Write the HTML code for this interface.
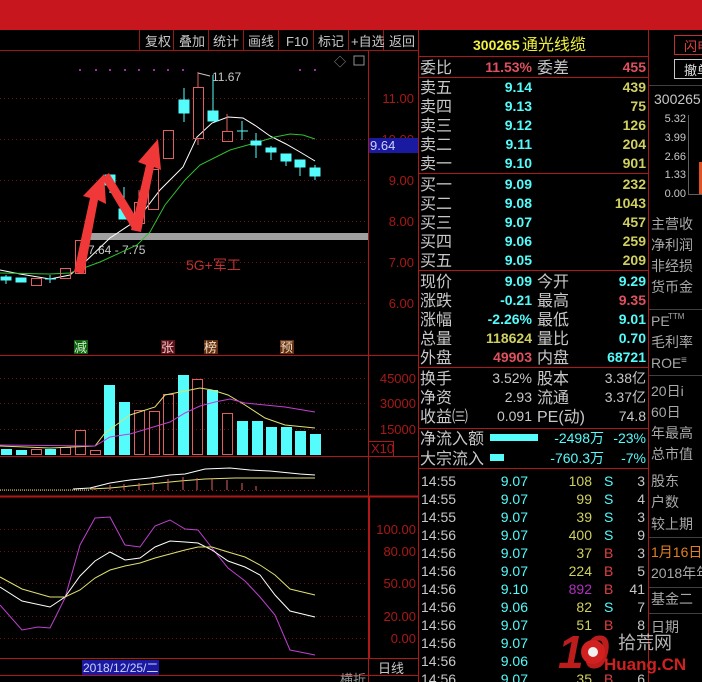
<!DOCTYPE html>
<html><head><meta charset="utf-8"><style>
html,body{margin:0;padding:0;background:#000;}
svg{display:block;font-family:"Liberation Sans","Noto Sans CJK SC",sans-serif;}
.l{fill:#c8c8c8;font-size:16px;}
.n{font-size:14px;font-weight:bold;font-family:"Liberation Sans",sans-serif;}
.ax{fill:#a81818;font-size:13px;font-family:"Liberation Sans",sans-serif;}
.g{fill:#a8a8a8;font-size:14px;}
</style></head><body>
<svg width="702" height="682" viewBox="0 0 702 682" xmlns="http://www.w3.org/2000/svg">
<rect x="0" y="0" width="702" height="30" fill="#c8161e"/>
<g stroke="#9a1818" stroke-width="1" fill="none">
<line x1="0" y1="50.5" x2="418" y2="50.5"/>
<line x1="139.5" y1="30" x2="139.5" y2="50"/><line x1="173.5" y1="30" x2="173.5" y2="50"/><line x1="208.5" y1="30" x2="208.5" y2="50"/><line x1="243.5" y1="30" x2="243.5" y2="50"/><line x1="278.5" y1="30" x2="278.5" y2="50"/><line x1="313.5" y1="30" x2="313.5" y2="50"/><line x1="348.5" y1="30" x2="348.5" y2="50"/><line x1="383.5" y1="30" x2="383.5" y2="50"/>
</g>
<g class="l" style="font-size:13px" fill="#c8c8c8">
<text x="145" y="46">复权</text><text x="179" y="46">叠加</text><text x="213" y="46">统计</text><text x="248" y="46">画线</text><text x="286" y="46">F10</text><text x="318" y="46">标记</text><text x="351" y="46">+自选</text><text x="389" y="46">返回</text>
</g>
<g stroke="#b01818" fill="none">
<line x1="368.5" y1="51" x2="368.5" y2="682"/>
<line x1="418.5" y1="30" x2="418.5" y2="682"/>
<line x1="0" y1="355.5" x2="418" y2="355.5"/>
<line x1="0" y1="456.5" x2="418" y2="456.5"/>
<line x1="0" y1="496.5" x2="418" y2="496.5" stroke-width="2"/>
<line x1="369" y1="496.5" x2="369" y2="658" stroke-width="2"/>
<line x1="0" y1="658.5" x2="418" y2="658.5"/>
<line x1="0" y1="675.5" x2="418" y2="675.5"/>
<rect x="368.5" y="441.5" width="25" height="15"/>
</g>
<g stroke="#6a1010" stroke-dasharray="1,3">
<line x1="0" y1="98.5" x2="368" y2="98.5"/><line x1="0" y1="139.5" x2="368" y2="139.5"/><line x1="0" y1="180.5" x2="368" y2="180.5"/><line x1="0" y1="221.5" x2="368" y2="221.5"/><line x1="0" y1="262.5" x2="368" y2="262.5"/><line x1="0" y1="303.5" x2="368" y2="303.5"/>
<line x1="0" y1="378.5" x2="368" y2="378.5"/><line x1="0" y1="403.5" x2="368" y2="403.5"/><line x1="0" y1="429.5" x2="368" y2="429.5"/>
<line x1="0" y1="490.5" x2="368" y2="490.5" stroke="#b01818"/>
<line x1="0" y1="529.5" x2="368" y2="529.5"/><line x1="0" y1="551.5" x2="368" y2="551.5"/><line x1="0" y1="583.5" x2="368" y2="583.5"/><line x1="0" y1="616.5" x2="368" y2="616.5"/><line x1="0" y1="638.5" x2="368" y2="638.5"/>
</g>
<g class="ax" text-anchor="end">
<text x="414" y="103">11.00</text><text x="414" y="144">10.00</text><text x="414" y="185">9.00</text><text x="414" y="226">8.00</text><text x="414" y="267">7.00</text><text x="414" y="308">6.00</text>
<text x="416" y="383">45000</text><text x="416" y="408">30000</text><text x="416" y="434">15000</text>
<text x="416" y="534">100.00</text><text x="416" y="556">80.00</text><text x="416" y="588">50.00</text><text x="416" y="621">20.00</text><text x="416" y="643">0.00</text>
</g>
<text x="371" y="453" class="ax">X10</text>
<rect x="369" y="138" width="49" height="15" fill="#1a1aa0"/>
<text x="370" y="150" fill="#d0d0ff" font-size="13">9.64</text>
<g fill="#a030a0"><rect x="79" y="69" width="2" height="2"/><rect x="95" y="69" width="2" height="2"/><rect x="109" y="69" width="2" height="2"/><rect x="124" y="69" width="2" height="2"/><rect x="138" y="69" width="2" height="2"/><rect x="153" y="69" width="2" height="2"/><rect x="167" y="69" width="2" height="2"/><rect x="182" y="69" width="2" height="2"/><rect x="299" y="69" width="2" height="2"/><rect x="314" y="69" width="2" height="2"/></g>
<text x="334" y="66" fill="#909090" font-size="12">◇</text>
<rect x="354" y="56" width="10" height="9" fill="none" stroke="#909090"/>
<text x="212" y="81" fill="#c8c8c8" font-size="12">11.67</text>
<path d="M198 73 L198 80 M198 73 L210 76" stroke="#c8c8c8" fill="none"/>
<rect x="85" y="233" width="283" height="7" fill="#a0a0a0"/>
<text x="88" y="254" fill="#c8c8c8" font-size="12">7.64 - 7.75</text>
<text x="186" y="270" fill="#c03030" font-size="14">5G+军工</text>
<polyline fill="none" stroke="#ffffff" stroke-width="1" points="0,270 20,274 50,279 70,275 85,262 110,238 137,220 160,190 183,167 197,137 212,123 228,117 243,118 256,126 270,136 286,144 300,152 315,161"/>
<polyline fill="none" stroke="#30c030" stroke-width="1" points="0,273 50,274 70,273 100,262 137,245 150,232 165,205 185,180 200,165 230,150 255,143 275,137 290,134 303,135 315,139"/>
<g stroke="#54fcfc" fill="#54fcfc">
<rect x="1" y="277" width="10" height="3"/><line x1="6" y1="275" x2="6" y2="284"/>
<rect x="16" y="278" width="10" height="4"/>
<line x1="45" y1="279" x2="56" y2="279"/><line x1="50" y1="275" x2="50" y2="283"/>
<rect x="105" y="175" width="10" height="10"/><line x1="110" y1="175" x2="110" y2="193"/>
<rect x="119" y="209" width="10" height="10"/><line x1="124" y1="187" x2="124" y2="219"/>
<rect x="179" y="100" width="10" height="13"/><line x1="184" y1="88" x2="184" y2="122"/>
<rect x="208" y="111" width="10" height="10"/><line x1="213" y1="75" x2="213" y2="121"/>
<line x1="237" y1="131" x2="248" y2="131"/><line x1="242" y1="121" x2="242" y2="140"/>
<rect x="251" y="141" width="10" height="4"/><line x1="256" y1="133" x2="256" y2="158"/>
<rect x="266" y="148" width="10" height="4"/><line x1="271" y1="146" x2="271" y2="160"/>
<rect x="281" y="154" width="10" height="7"/><line x1="286" y1="161" x2="286" y2="166"/>
<rect x="295" y="160" width="10" height="7"/><line x1="300" y1="167" x2="300" y2="176"/>
<rect x="310" y="168" width="10" height="8"/><line x1="315" y1="165" x2="315" y2="180"/>
</g>
<g stroke="#e06060" fill="none">
<rect x="31.5" y="278.5" width="10" height="7"/>
<rect x="60.5" y="268.5" width="10" height="10"/>
<rect x="75.5" y="240.5" width="10" height="33"/>
<rect x="134.5" y="202.5" width="10" height="21"/><line x1="139" y1="190" x2="139" y2="230"/>
<rect x="148.5" y="169.5" width="10" height="40"/>
<rect x="163.5" y="130.5" width="10" height="28"/>
<rect x="193.5" y="87.5" width="10" height="51"/><line x1="198" y1="72" x2="198" y2="87"/><line x1="198" y1="138" x2="198" y2="145"/>
<rect x="222.5" y="131.5" width="10" height="10"/><line x1="227" y1="114" x2="227" y2="131"/>
</g>
<g fill="#f03838">
<polygon points="74,272 90,198 83,196 104,174 106,204 98,200 84,274"/>
<polygon points="102,178 109,173 139,222 133,230"/>
<polygon points="131,230 146,165 138,162 158,139 161,170 154,167 141,232"/>
</g>
<rect x="74" y="340" width="14" height="14" fill="#106010"/><text x="74" y="352" fill="#c8f0c8" font-size="13">减</text>
<rect x="161" y="340" width="14" height="14" fill="#601018"/><text x="161" y="352" fill="#f0c8c8" font-size="13">张</text>
<rect x="204" y="340" width="14" height="14" fill="#603010"/><text x="204" y="352" fill="#f0d8c0" font-size="13">榜</text>
<rect x="280" y="340" width="14" height="14" fill="#603010"/><text x="280" y="352" fill="#f0d8c0" font-size="13">预</text>
<g fill="#54fcfc">
<rect x="1" y="449" width="11" height="6"/><rect x="16" y="450" width="11" height="5"/><rect x="45" y="449" width="11" height="6"/>
<rect x="104" y="385" width="11" height="70"/><rect x="119" y="402" width="11" height="53"/><rect x="178" y="375" width="11" height="80"/><rect x="207" y="390" width="11" height="65"/>
<rect x="237" y="421" width="11" height="34"/><rect x="252" y="421" width="11" height="34"/><rect x="266" y="427" width="11" height="28"/><rect x="281" y="427" width="11" height="28"/><rect x="295" y="431" width="11" height="24"/><rect x="310" y="434" width="11" height="21"/>
</g>
<g fill="none" stroke="#e06060">
<rect x="31.5" y="449.5" width="10" height="5"/><rect x="60.5" y="447.5" width="10" height="7"/><rect x="75.5" y="430.5" width="10" height="24"/><rect x="90.5" y="450.5" width="10" height="4"/>
<rect x="134.5" y="410.5" width="10" height="44"/><rect x="149.5" y="411.5" width="10" height="43"/><rect x="163.5" y="394.5" width="10" height="60"/><rect x="192.5" y="379.5" width="10" height="75"/><rect x="222.5" y="413.5" width="10" height="41"/>
</g>
<polyline fill="none" stroke="#e0e070" points="0,446 50,448 95,446 105,433 130,415 155,407 165,395 180,392 200,388 212,390 228,395 245,405 265,418 285,425 315,428"/>
<polyline fill="none" stroke="#c040d0" points="0,445 95,446 110,437 130,434 150,428 170,422 185,413 200,406 215,402 230,399 245,403 265,405 285,407 315,412"/>
<line x1="0" y1="490" x2="90" y2="490" stroke="#e0e070" stroke-dasharray="1,1"/>
<polyline fill="none" stroke="#ffffff" points="73,489 90,488 110,483 130,480 150,478 170,475 185,474 205,469 230,468 250,470 270,471 300,474 315,475"/>
<polyline fill="none" stroke="#e0e070" points="90,489 110,488 140,485 160,483 180,481 205,479 235,478 260,478 290,478 315,478"/>
<g stroke="#e06060"><line x1="95" y1="490" x2="95" y2="487"/><line x1="110" y1="490" x2="110" y2="485"/><line x1="124" y1="490" x2="124" y2="484"/><line x1="139" y1="490" x2="139" y2="483"/><line x1="153" y1="490" x2="153" y2="482"/><line x1="168" y1="490" x2="168" y2="479"/><line x1="183" y1="490" x2="183" y2="477"/><line x1="197" y1="490" x2="197" y2="478"/><line x1="212" y1="490" x2="212" y2="478"/><line x1="227" y1="490" x2="227" y2="480"/><line x1="242" y1="490" x2="242" y2="483"/><line x1="256" y1="490" x2="256" y2="486"/></g>
<polyline fill="none" stroke="#c040d0" points="0,605 22,630 38,627 50,628 65,598 80,545 95,518 110,517 125,545 140,547 155,526 170,520 185,529 198,530 212,548 228,568 245,581 260,597 275,615 290,650 300,652 315,655"/>
<polyline fill="none" stroke="#ffffff" points="0,587 22,601 50,607 65,597 80,576 95,561 110,552 125,560 140,558 155,547 170,541 185,542 198,543 212,550 228,561 245,567 260,575 275,595 290,611 315,617"/>
<polyline fill="none" stroke="#e0e070" points="0,577 22,589 50,597 65,597 80,590 95,578 110,570 125,566 140,563 155,558 170,554 185,550 198,547 212,547 228,552 245,557 260,565 275,575 290,589 315,595"/>
<rect x="82" y="660" width="77" height="15" fill="#1a1aa0"/>
<text x="83" y="672" fill="#d0d0ff" font-size="12">2018/12/25/二</text>
<text x="378" y="673" fill="#c8c8c8" font-size="13">日线</text>
<text x="340" y="684" fill="#909090" font-size="13">横折</text>
<g stroke="#b01818" fill="none">
<line x1="648.5" y1="30" x2="648.5" y2="682"/>
<line x1="419" y1="56.5" x2="648" y2="56.5"/><line x1="419" y1="77.5" x2="648" y2="77.5"/><line x1="419" y1="173.5" x2="648" y2="173.5"/><line x1="419" y1="270.5" x2="648" y2="270.5"/><line x1="419" y1="367.5" x2="648" y2="367.5"/><line x1="419" y1="428.5" x2="648" y2="428.5"/><line x1="419" y1="468.5" x2="648" y2="468.5"/>
</g>
<text x="473" y="50" fill="#f0f040" font-size="14" font-weight="bold">300265</text>
<text x="522" y="50" fill="#f0f040" font-size="16">通光线缆</text>
<g class="l">
<text x="420" y="73">委比</text><text x="537" y="73">委差</text>
<text x="420" y="93">卖五</text><text x="420" y="112">卖四</text><text x="420" y="131">卖三</text><text x="420" y="150">卖二</text><text x="420" y="169">卖一</text>
<text x="420" y="190">买一</text><text x="420" y="209">买二</text><text x="420" y="228">买三</text><text x="420" y="247">买四</text><text x="420" y="266">买五</text>
<text x="420" y="287">现价</text><text x="537" y="287">今开</text>
<text x="420" y="306">涨跌</text><text x="537" y="306">最高</text>
<text x="420" y="325">涨幅</text><text x="537" y="325">最低</text>
<text x="420" y="344">总量</text><text x="537" y="344">量比</text>
<text x="420" y="363">外盘</text><text x="537" y="363">内盘</text>
<text x="420" y="384">换手</text><text x="537" y="384">股本</text>
<text x="420" y="403">净资</text><text x="537" y="403">流通</text>
<text x="420" y="422">收益㈢</text><text x="537" y="422">PE(动)</text>
<text x="420" y="444">净流入额</text><text x="420" y="464">大宗流入</text>
</g>
<g class="n" text-anchor="end">
<text x="532" y="72" fill="#e05060">11.53%</text><text x="646" y="72" fill="#e05060">455</text>
<g fill="#54fcfc"><text x="532" y="92">9.14</text><text x="532" y="111">9.13</text><text x="532" y="130">9.12</text><text x="532" y="149">9.11</text><text x="532" y="168">9.10</text><text x="532" y="189">9.09</text><text x="532" y="208">9.08</text><text x="532" y="227">9.07</text><text x="532" y="246">9.06</text><text x="532" y="265">9.05</text>
<text x="532" y="286">9.09</text><text x="532" y="305">-0.21</text><text x="532" y="324">-2.26%</text><text x="646" y="286">9.29</text><text x="646" y="324">9.01</text><text x="646" y="343">0.70</text><text x="646" y="362">68721</text></g>
<g fill="#d0d060"><text x="646" y="92">439</text><text x="646" y="111">75</text><text x="646" y="130">126</text><text x="646" y="149">204</text><text x="646" y="168">901</text><text x="646" y="189">232</text><text x="646" y="208">1043</text><text x="646" y="227">457</text><text x="646" y="246">259</text><text x="646" y="265">209</text><text x="532" y="343">118624</text></g>
<text x="646" y="305" fill="#e05060">9.35</text><text x="532" y="362" fill="#e05060">49903</text>
<g fill="#c8c8c8" font-weight="normal"><text x="532" y="383">3.52%</text><text x="532" y="402">2.93</text><text x="532" y="421">0.091</text><text x="646" y="383">3.38亿</text><text x="646" y="402">3.37亿</text><text x="646" y="421">74.8</text></g>
<g fill="#54fcfc" font-weight="normal"><text x="604" y="443">-2498万</text><text x="646" y="443">-23%</text><text x="604" y="463">-760.3万</text><text x="646" y="463">-7%</text></g>
</g>
<rect x="490" y="434" width="48" height="7" fill="#54fcfc"/>
<rect x="490" y="454" width="14" height="7" fill="#54fcfc"/>
<g class="n" font-size="14">
<g fill="#c8c8c8" font-weight="normal"><text x="421" y="486">14:55</text><text x="421" y="504">14:55</text><text x="421" y="522">14:55</text><text x="421" y="540">14:56</text><text x="421" y="558">14:56</text><text x="421" y="576">14:56</text><text x="421" y="594">14:56</text><text x="421" y="612">14:56</text><text x="421" y="630">14:56</text><text x="421" y="648">14:56</text><text x="421" y="666">14:56</text><text x="421" y="684">14:56</text></g>
<g fill="#54fcfc" text-anchor="end" font-weight="normal"><text x="528" y="486">9.07</text><text x="528" y="504">9.07</text><text x="528" y="522">9.07</text><text x="528" y="540">9.07</text><text x="528" y="558">9.07</text><text x="528" y="576">9.07</text><text x="528" y="594">9.10</text><text x="528" y="612">9.06</text><text x="528" y="630">9.07</text><text x="528" y="648">9.07</text><text x="528" y="666">9.06</text><text x="528" y="684">9.07</text></g>
<g fill="#d0d060" text-anchor="end" font-weight="normal"><text x="592" y="486">108</text><text x="592" y="504">99</text><text x="592" y="522">39</text><text x="592" y="540">400</text><text x="592" y="558">37</text><text x="592" y="576">224</text><text x="592" y="594" fill="#b030c0">892</text><text x="592" y="612">82</text><text x="592" y="630">51</text><text x="592" y="684">35</text></g>
<g font-weight="normal"><text x="604" y="486" fill="#54fcfc">S</text><text x="604" y="504" fill="#54fcfc">S</text><text x="604" y="522" fill="#54fcfc">S</text><text x="604" y="540" fill="#54fcfc">S</text><text x="604" y="558" fill="#e04040">B</text><text x="604" y="576" fill="#e04040">B</text><text x="604" y="594" fill="#e04040">B</text><text x="604" y="612" fill="#54fcfc">S</text><text x="604" y="630" fill="#e04040">B</text><text x="604" y="684" fill="#e04040">B</text></g>
<g fill="#c8c8c8" text-anchor="end" font-weight="normal"><text x="645" y="486">3</text><text x="645" y="504">4</text><text x="645" y="522">3</text><text x="645" y="540">9</text><text x="645" y="558">3</text><text x="645" y="576">5</text><text x="645" y="594">41</text><text x="645" y="612">7</text><text x="645" y="630">8</text><text x="645" y="684">6</text></g>
</g>
<rect x="674.5" y="35.5" width="30" height="19" fill="none" stroke="#c03030"/>
<text x="684" y="51" fill="#e04040" font-size="13">闪电</text>
<rect x="674.5" y="59.5" width="30" height="19" fill="none" stroke="#c8c8c8"/>
<text x="684" y="75" fill="#e0e0e0" font-size="13">撤单</text>
<line x1="649" y1="85.5" x2="702" y2="85.5" stroke="#404040"/>
<text x="654" y="104" fill="#c8c8c8" font-size="14">300265</text>
<g fill="#c8c8c8" font-size="11" text-anchor="end"><text x="686" y="122">5.32</text><text x="686" y="141">3.99</text><text x="686" y="160">2.66</text><text x="686" y="178">1.33</text><text x="686" y="197">0.00</text></g>
<line x1="688.5" y1="115" x2="688.5" y2="194" stroke="#606060"/><line x1="688" y1="194.5" x2="702" y2="194.5" stroke="#606060"/>
<rect x="699" y="162" width="3" height="32" fill="#e05020"/>
<g class="g" font-size="14">
<text x="651" y="229">主营收</text><text x="651" y="250">净利润</text><text x="651" y="271">非经损</text><text x="651" y="292">货币金</text>
<text x="651" y="326">PE</text><text x="668" y="319" font-size="8">TTM</text><text x="651" y="347">毛利率</text><text x="651" y="368">ROE</text><text x="681" y="363" font-size="10">≡</text>
<text x="651" y="396">20日i</text><text x="651" y="417">60日</text><text x="651" y="438">年最高</text><text x="651" y="459">总市值</text>
<text x="651" y="486">股东</text><text x="651" y="507">户数</text><text x="651" y="529">较上期</text>
<text x="651" y="557" fill="#e08020">1月16日</text><text x="651" y="578">2018年年</text>
<text x="651" y="604">基金二</text><text x="651" y="632">日期</text>
</g>
<g stroke="#404040"><line x1="649" y1="309.5" x2="702" y2="309.5"/><line x1="649" y1="375.5" x2="702" y2="375.5"/><line x1="649" y1="537.5" x2="702" y2="537.5"/><line x1="649" y1="587.5" x2="702" y2="587.5"/><line x1="649" y1="613.5" x2="702" y2="613.5"/></g>
<text x="558" y="668" fill="#d02020" font-size="46" font-weight="bold" font-style="italic" opacity="0.9">10</text>
<circle cx="593" cy="652" r="12" fill="#d02020"/>
<circle cx="593" cy="652" r="5" fill="#f0f0f0"/>
<text x="618" y="649" fill="#e0e0e0" font-size="18" opacity="0.8">拾荒网</text>
<text x="604" y="670" fill="#d02020" font-size="17" font-weight="bold">Huang.CN</text>
</svg>
</body></html>
